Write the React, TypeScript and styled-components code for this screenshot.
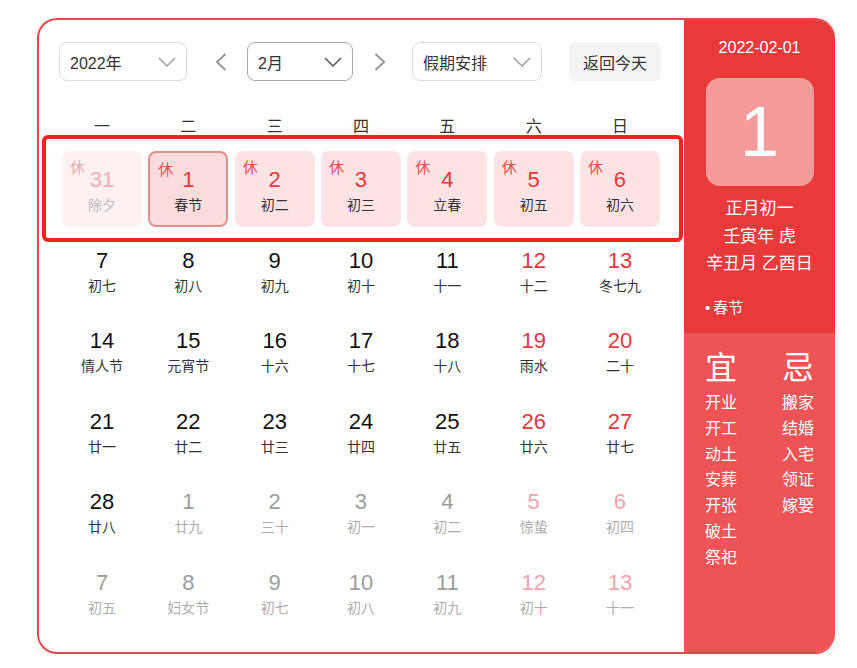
import React from "react";
import styled, { createGlobalStyle, css } from "styled-components";

const GlobalStyle = createGlobalStyle`
  body {
    margin: 0;
    background: #fff;
    font-family: "Liberation Sans", "Noto Sans CJK SC", sans-serif;
  }
`;

type Kind = "normal" | "weekend" | "other" | "otherWeekend" | "prevHoliday" | "holiday";

interface Day {
  n: number;
  lunar: string;
  kind: Kind;
  rest?: boolean;
  selected?: boolean;
}

const d = (n: number, lunar: string, kind: Kind, extra: Partial<Day> = {}): Day => ({ n, lunar, kind, ...extra });

const days: Day[] = [
  d(31, "除夕", "prevHoliday", { rest: true }),
  d(1, "春节", "holiday", { rest: true, selected: true }),
  d(2, "初二", "holiday", { rest: true }),
  d(3, "初三", "holiday", { rest: true }),
  d(4, "立春", "holiday", { rest: true }),
  d(5, "初五", "holiday", { rest: true }),
  d(6, "初六", "holiday", { rest: true }),
  d(7, "初七", "normal"),
  d(8, "初八", "normal"),
  d(9, "初九", "normal"),
  d(10, "初十", "normal"),
  d(11, "十一", "normal"),
  d(12, "十二", "weekend"),
  d(13, "冬七九", "weekend"),
  d(14, "情人节", "normal"),
  d(15, "元宵节", "normal"),
  d(16, "十六", "normal"),
  d(17, "十七", "normal"),
  d(18, "十八", "normal"),
  d(19, "雨水", "weekend"),
  d(20, "二十", "weekend"),
  d(21, "廿一", "normal"),
  d(22, "廿二", "normal"),
  d(23, "廿三", "normal"),
  d(24, "廿四", "normal"),
  d(25, "廿五", "normal"),
  d(26, "廿六", "weekend"),
  d(27, "廿七", "weekend"),
  d(28, "廿八", "normal"),
  d(1, "廿九", "other"),
  d(2, "三十", "other"),
  d(3, "初一", "other"),
  d(4, "初二", "other"),
  d(5, "惊蛰", "otherWeekend"),
  d(6, "初四", "otherWeekend"),
  d(7, "初五", "other"),
  d(8, "妇女节", "other"),
  d(9, "初七", "other"),
  d(10, "初八", "other"),
  d(11, "初九", "other"),
  d(12, "初十", "otherWeekend"),
  d(13, "十一", "otherWeekend"),
];

const weekdays = ["一", "二", "三", "四", "五", "六", "日"];
const good = ["开业", "开工", "动土", "安葬", "开张", "破土", "祭祀"];
const bad = ["搬家", "结婚", "入宅", "领证", "嫁娶"];

const numberColor: Record<Kind, string> = {
  normal: "#111",
  weekend: "#e8363c",
  other: "#9c9c9c",
  otherWeekend: "#f2a3ab",
  prevHoliday: "#f3aeb3",
  holiday: "#e8363c",
};

const lunarColor: Record<Kind, string> = {
  normal: "#333",
  weekend: "#333",
  other: "#adadad",
  otherWeekend: "#adadad",
  prevHoliday: "#bcbcbc",
  holiday: "#333",
};

// thin chevrons as in the reference, wider than the icon-set ones
const Caret = () => (
  <svg width="18" height="10" viewBox="0 0 18 10" fill="none" stroke="currentColor" strokeWidth="1.5">
    <polyline points="1,1 9,9 17,1" />
  </svg>
);

const NavArrow = ({ dir }: { dir: "left" | "right" }) => (
  <svg width="12" height="20" viewBox="0 0 12 20" fill="none" stroke="currentColor" strokeWidth="2">
    <polyline points={dir === "left" ? "10.5,2 2,10 10.5,18" : "1.5,2 10,10 1.5,18"} />
  </svg>
);

const Page = styled.div`
  padding: 18px 0 0 37px;
`;

const Card = styled.div`
  width: 798px;
  height: 636px;
  box-sizing: border-box;
  border: 2px solid #e44848;
  border-right: none;
  border-radius: 20px;
  overflow: hidden;
  display: flex;
  box-shadow: 0 3px 10px rgba(0, 0, 0, 0.08);
`;

const Main = styled.div`
  width: 645px;
  flex-shrink: 0;
  box-sizing: border-box;
  padding: 22px 0 0 20px;
`;

const Toolbar = styled.div`
  display: flex;
  align-items: center;
  height: 39px;
`;

const Select = styled.div<{ $w: number; $active?: boolean }>`
  width: ${({ $w }) => $w}px;
  height: 39px;
  box-sizing: border-box;
  border: 1px solid ${({ $active }) => ($active ? "#a8a8a8" : "#dcdcdc")};
  border-radius: 8px;
  display: flex;
  align-items: center;
  justify-content: space-between;
  padding: 0 10px 0 10px;
  font-size: 16px;
  color: #333;
  svg {
    color: ${({ $active }) => ($active ? "#555" : "#a0a0a0")};
  }
`;

const Arrow = styled.div<{ $ml: number; $mr: number }>`
  width: 26px;
  display: flex;
  justify-content: center;
  margin: 0 ${({ $mr }) => $mr}px 0 ${({ $ml }) => $ml}px;
  color: #999;
`;

const TodayButton = styled.div`
  margin-left: 27px;
  width: 92px;
  height: 39px;
  border-radius: 6px;
  background: #f4f4f4;
  display: flex;
  align-items: center;
  justify-content: center;
  font-size: 16px;
  color: #333;
`;

const Week = styled.div`
  display: grid;
  grid-template-columns: repeat(7, 80px);
  column-gap: 6.33px;
  margin: 30px 0 0 3px;
  height: 28px;
  align-items: center;
  font-size: 16px;
  color: #333;
  text-align: center;
`;

const GridWrap = styled.div`
  position: relative;
  margin: 12px 0 0 3px;
`;

const Grid = styled.div`
  display: grid;
  grid-template-columns: repeat(7, 80px);
  grid-auto-rows: 76px;
  column-gap: 6.33px;
  row-gap: 4.6px;
`;

const Highlight = styled.div`
  position: absolute;
  top: -16px;
  left: -20px;
  width: 641px;
  height: 107px;
  box-sizing: border-box;
  border: 4px solid #f5231f;
  border-radius: 6px;
  pointer-events: none;
`;

const Cell = styled.div<{ $kind: Kind; $selected?: boolean }>`
  position: relative;
  box-sizing: border-box;
  border-radius: 8px;
  display: flex;
  flex-direction: column;
  align-items: center;
  padding-top: 16px;
  ${({ $kind }) =>
    $kind === "holiday" &&
    css`
      background: #fde3e4;
    `}
  ${({ $kind }) =>
    $kind === "prevHoliday" &&
    css`
      background: #fdf1f2;
    `}
  ${({ $selected }) =>
    $selected &&
    css`
      background: #fcdcdd;
      border: 2px solid #e78e8f;
      padding-top: 14px;
    `}
`;

const Num = styled.div<{ $kind: Kind }>`
  font-size: 22px;
  line-height: 26px;
  color: ${({ $kind }) => numberColor[$kind]};
`;

const Lunar = styled.div<{ $kind: Kind }>`
  margin-top: 2px;
  font-size: 14px;
  line-height: 20px;
  color: ${({ $kind }) => lunarColor[$kind]};
`;

const Rest = styled.span<{ $faded?: boolean }>`
  position: absolute;
  top: 8px;
  left: 8px;
  font-size: 15px;
  line-height: 18px;
  color: ${({ $faded }) => ($faded ? "#f2a9ae" : "#ef4a50")};
`;

const Side = styled.div`
  width: 151px;
  min-width: 0;
  flex-shrink: 0;
  display: flex;
  flex-direction: column;
  color: #fff;
`;

const SideTop = styled.div`
  height: 313px;
  background: #e93a3b;
  display: flex;
  flex-direction: column;
  align-items: center;
  padding-top: 18px;
  box-sizing: border-box;
`;

const DateText = styled.div`
  font-size: 16px;
  line-height: 20px;
`;

const BigDay = styled.div`
  margin-top: 20px;
  width: 108px;
  height: 108px;
  border-radius: 14px;
  background: #f49b9b;
  display: flex;
  align-items: center;
  justify-content: center;
  font-size: 70px;
  line-height: 1;
`;

const LunarInfo = styled.div`
  margin-top: 9px;
  font-size: 17px;
  line-height: 27.5px;
  text-align: center;
`;

const Festival = styled.div`
  align-self: stretch;
  padding-left: 21px;
  margin-top: 20px;
  font-size: 15px;
  line-height: 20px;
  span {
    margin-right: 3px;
  }
`;

const SideBottom = styled.div`
  flex: 1;
  background: #ee5455;
  display: flex;
  padding: 17px 0 0 21px;
`;

const AdviceCol = styled.div`
  width: 77px;
  flex-shrink: 0;
  display: flex;
  flex-direction: column;
  & + & {
    width: auto;
  }
`;

const AdviceHead = styled.div`
  font-size: 32px;
  line-height: 36px;
  margin-bottom: 4px;
`;

const AdviceItem = styled.div`
  font-size: 16px;
  line-height: 25.8px;
`;

export default function App() {
  return (
    <Page>
      <GlobalStyle />
      <Card>
        <Main>
          <Toolbar>
            <Select $w={128}>
              2022年
              <Caret />
            </Select>
            <Arrow $ml={21} $mr={13}>
              <NavArrow dir="left" />
            </Arrow>
            <Select $w={106} $active>
              2月
              <Caret />
            </Select>
            <Arrow $ml={14} $mr={19}>
              <NavArrow dir="right" />
            </Arrow>
            <Select $w={130}>
              假期安排
              <Caret />
            </Select>
            <TodayButton>返回今天</TodayButton>
          </Toolbar>
          <Week>
            {weekdays.map((w) => (
              <div key={w}>{w}</div>
            ))}
          </Week>
          <GridWrap>
            <Grid>
              {days.map((day, i) => (
                <Cell key={i} $kind={day.kind} $selected={day.selected}>
                  {day.rest && <Rest $faded={day.kind === "prevHoliday"}>休</Rest>}
                  <Num $kind={day.kind}>{day.n}</Num>
                  <Lunar $kind={day.kind}>{day.lunar}</Lunar>
                </Cell>
              ))}
            </Grid>
            <Highlight />
          </GridWrap>
        </Main>
        <Side>
          <SideTop>
            <DateText>2022-02-01</DateText>
            <BigDay>1</BigDay>
            <LunarInfo>
              正月初一
              <br />
              壬寅年 虎
              <br />
              辛丑月 乙酉日
            </LunarInfo>
            <Festival>
              <span>•</span>春节
            </Festival>
          </SideTop>
          <SideBottom>
            <AdviceCol>
              <AdviceHead>宜</AdviceHead>
              {good.map((g) => (
                <AdviceItem key={g}>{g}</AdviceItem>
              ))}
            </AdviceCol>
            <AdviceCol>
              <AdviceHead>忌</AdviceHead>
              {bad.map((b) => (
                <AdviceItem key={b}>{b}</AdviceItem>
              ))}
            </AdviceCol>
          </SideBottom>
        </Side>
      </Card>
    </Page>
  );
}
